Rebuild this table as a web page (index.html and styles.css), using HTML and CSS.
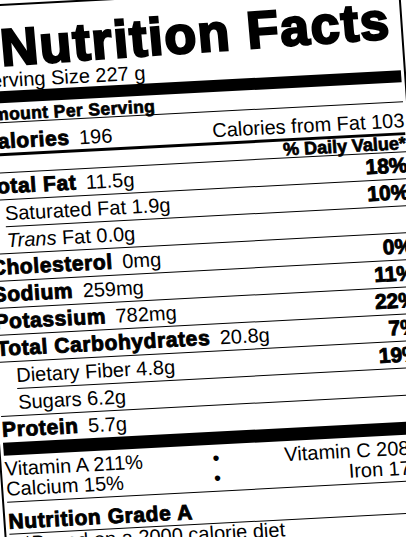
FILE: index.html
```html
<!DOCTYPE html>
<html lang="en">
<head>
    <meta charset="UTF-8">
    <meta name="viewport" content="width=device-width, initial-scale=1.0">
    <title>Nutrition Facts</title>
    <link rel="stylesheet" href="styles.css">
</head>
<body>
    <!-- 营养成分表（整体倾斜） -->
    <div class="label">
        <h1 class="title">Nutrition Facts</h1>
        <div class="serving">Serving Size 227 g</div>
        <div class="amount">Amount Per Serving</div>

        <div class="calories">
            <span><b>Calories</b> 196</span>
            <span>Calories from Fat 103</span>
        </div>
        <div class="dv">% Daily Value*</div>

        <!-- 营养素列表 -->
        <div class="row"><span><b>Total Fat</b> 11.5g</span><b class="pct">18%</b></div>
        <div class="row sub"><span>Saturated Fat 1.9g</span><b class="pct">10%</b></div>
        <div class="row sub cont"><span><i>Trans</i> Fat 0.0g</span></div>
        <div class="row"><span><b>Cholesterol</b> 0mg</span><b class="pct">0%</b></div>
        <div class="row"><span><b>Sodium</b> 259mg</span><b class="pct">11%</b></div>
        <div class="row"><span><b>Potassium</b> 782mg</span><b class="pct">22%</b></div>
        <div class="row"><span><b>Total Carbohydrates</b> 20.8g</span><b class="pct">7%</b></div>
        <div class="row sub"><span>Dietary Fiber 4.8g</span><b class="pct">19%</b></div>
        <div class="row sub cont"><span>Sugars 6.2g</span></div>
        <div class="row last"><span><b>Protein</b> 5.7g</span></div>

        <!-- 维生素 -->
        <div class="vitamins">
            <span>Vitamin A 211%</span>
            <span class="dot">•</span>
            <span class="right">Vitamin C 208%</span>
            <span>Calcium 15%</span>
            <span class="dot">•</span>
            <span class="right">Iron 17%</span>
        </div>

        <div class="grade">Nutrition Grade A</div>
        <div class="note">*Based on a 2000 calorie diet</div>
    </div>
</body>
</html>
```

FILE: styles.css
```css
/* 基础设置 */
* {
    margin: 0;
    padding: 0;
    box-sizing: border-box;
}

html, body {
    overflow: hidden;
    background: #fff;
}

body {
    font-family: 'Liberation Sans', Arial, sans-serif;
    font-size: 20px;
    color: #000;
}

/* 标签外框：照片里是斜着拍的 */
.label {
    width: 433px;
    margin: 4px 0 0 -33px;
    border: 2px solid #000;
    padding: 0 3px 30px 3px;
    transform: matrix(0.9986, -0.0523, 0.07, 0.9986, 0, 0);
    transform-origin: 33px -4px;
}

b {
    font-weight: 700;
    letter-spacing: 0.6px;
    -webkit-text-stroke: 0.9px #000;
}

/* 大标题，左边比右边更低一点 */
.title {
    font-size: 52px;
    line-height: 52px;
    font-weight: 700;
    letter-spacing: 1.6px;
    -webkit-text-stroke: 2.4px #000;
    padding: 12px 0 0 25px;
    white-space: nowrap;
    transform: rotate(-1deg);
    transform-origin: 55% 60%;
}

.serving {
    line-height: 22px;
    margin-top: -1.5px;
    border-bottom: 12px solid #000;
}

.amount {
    font-size: 17.5px;
    line-height: 16px;
    font-weight: 700;
    letter-spacing: 0.4px;
    -webkit-text-stroke: 0.7px #000;
    padding-top: 3.5px;
    border-bottom: 1px solid #000;
}

.calories {
    display: flex;
    justify-content: space-between;
    align-items: baseline;
    line-height: 24px;
    padding-top: 6px;
    border-bottom: 3px solid #000;
}

.calories b,
.row b {
    font-size: 21px;
    margin-right: 4px;
}

.dv {
    text-align: right;
    font-size: 18px;
    line-height: 16px;
    font-weight: 700;
    -webkit-text-stroke: 0.7px #000;
}

/* 每一行营养素 */
.row {
    display: flex;
    justify-content: space-between;
    align-items: baseline;
    line-height: 26px;
    border-top: 1px solid #000;
    white-space: nowrap;
}

.row .pct {
    margin-right: 0;
    letter-spacing: 0;
}

.row.sub {
    padding-left: 18px;
}

.row.sub.cont {
    padding-left: 0;
    margin-left: 18px;
}

.row.last {
    border-bottom: 13px solid #000;
}

/* 维生素两列 */
.vitamins {
    display: grid;
    grid-template-columns: 1fr auto 1fr;
    column-gap: 10px;
    line-height: 20px;
    padding: 2.5px 0 3px;
    border-bottom: 1px solid #000;
    white-space: nowrap;
}

.vitamins .right {
    text-align: right;
}

.grade {
    font-size: 21px;
    line-height: 24px;
    font-weight: 700;
    letter-spacing: 0.6px;
    -webkit-text-stroke: 0.9px #000;
    padding-top: 7px;
    border-bottom: 1px solid #000;
}

.note {
    line-height: 18px;
    padding-left: 14px;
}
```
